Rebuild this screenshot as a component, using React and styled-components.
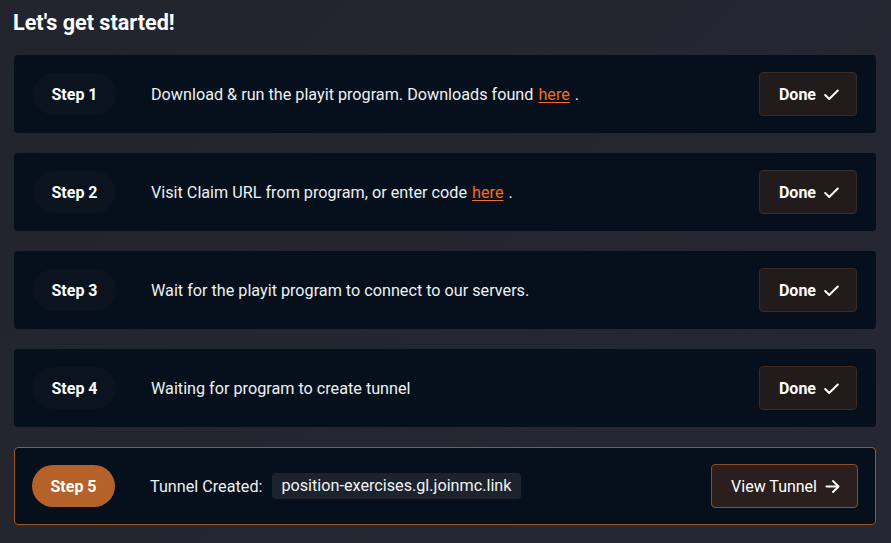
import React from 'react';
import styled, { createGlobalStyle } from 'styled-components';

let GlobalStyle = createGlobalStyle`
  html, body {
    margin: 0;
    padding: 0;
    background: #23252f;
  }
  body {
    font-family: Roboto, 'Noto Sans', sans-serif;
    color: #f1f3f5;
  }
`;

let Page = styled.div`
  width: 891px;
  height: 543px;
  box-sizing: border-box;
  padding: 8px 15px 0 14px;
  background: linear-gradient(135deg, #22242d 0%, #252733 100%);
  overflow: hidden;
`;

let Title = styled.h1`
  margin: 0 0 18px -1px;
  font-size: 21.6px;
  line-height: 29px;
  font-weight: 700;
  color: #ffffff;
`;

let StepList = styled.div`
  display: flex;
  flex-direction: column;
  gap: 20px;
`;

let Card = styled.div`
  display: flex;
  align-items: center;
  height: 78px;
  box-sizing: border-box;
  padding: 0 18px;
  border-radius: 4px;
  background: #06101c;
  border: 1px solid ${(props) => (props.active ? '#a0561f' : 'transparent')};
`;

let Pill = styled.div`
  flex: none;
  width: 83px;
  height: 42px;
  border-radius: 21px;
  display: flex;
  align-items: center;
  justify-content: center;
  font-size: 16px;
  font-weight: 700;
  color: #ffffff;
  background: ${(props) => (props.active ? '#b5622a' : '#0b141e')};
  margin-left: ${(props) => (props.active ? '-1px' : '0')};
`;

let Text = styled.div`
  flex: 1;
  display: flex;
  align-items: center;
  margin-left: 35px;
  font-size: 16.2px;
  color: #eef1f4;
  white-space: nowrap;
`;

let Link = styled.a`
  color: #f46c20;
  text-decoration: underline;
  text-underline-offset: 2px;
  margin: 0 5px;
`;

let Code = styled.span`
  margin-left: 10px;
  padding: 0 9px;
  height: 26px;
  line-height: 26px;
  border-radius: 4px;
  background: #1c232d;
  color: #f1f3f5;
`;

let Button = styled.button`
  flex: none;
  display: flex;
  align-items: center;
  gap: 8px;
  height: 44px;
  box-sizing: border-box;
  padding: 0 17px 0 19px;
  border-radius: 4px;
  font-family: Roboto, sans-serif;
  font-size: 16px;
  font-weight: ${(props) => (props.active ? 400 : 700)};
  color: #ffffff;
  background: ${(props) => (props.active ? '#2a1f1e' : '#221b1b')};
  border: 1px solid ${(props) => (props.active ? '#8d4d22' : '#3a2a22')};
  margin-right: ${(props) => (props.active ? '-1px' : '0')};
`;

let Check = () => (
  <svg width="15" height="15" viewBox="0 0 15 15" fill="none" stroke="#ffffff" strokeWidth="2" strokeLinecap="round" strokeLinejoin="round">
    <path d="M1.2 8 L5.2 12 L13.8 3.5" />
  </svg>
);

let Arrow = () => (
  <svg width="15" height="15" viewBox="0 0 15 15" fill="none" stroke="#ffffff" strokeWidth="2" strokeLinecap="round" strokeLinejoin="round">
    <path d="M1.5 7.5 H13.5 M8 2 L13.5 7.5 L8 13" />
  </svg>
);

let steps = [
  {
    label: 'Step 1',
    body: (
      <>
        Download &amp; run the playit program. Downloads found <Link href="#">here</Link>.
      </>
    ),
  },
  {
    label: 'Step 2',
    body: (
      <>
        Visit Claim URL from program, or enter code <Link href="#">here</Link>.
      </>
    ),
  },
  { label: 'Step 3', body: 'Wait for the playit program to connect to our servers.' },
  { label: 'Step 4', body: 'Waiting for program to create tunnel' },
];

export default function App() {
  return (
    <Page>
      <GlobalStyle />
      <Title>Let's get started!</Title>
      <StepList>
        {steps.map((s) => (
          <Card key={s.label}>
            <Pill>{s.label}</Pill>
            <Text>{s.body}</Text>
            <Button>
              Done <Check />
            </Button>
          </Card>
        ))}
        <Card active>
          <Pill active>Step 5</Pill>
          <Text>
            Tunnel Created:
            <Code>position-exercises.gl.joinmc.link</Code>
          </Text>
          <Button active>
            View Tunnel <Arrow />
          </Button>
        </Card>
      </StepList>
    </Page>
  );
}
